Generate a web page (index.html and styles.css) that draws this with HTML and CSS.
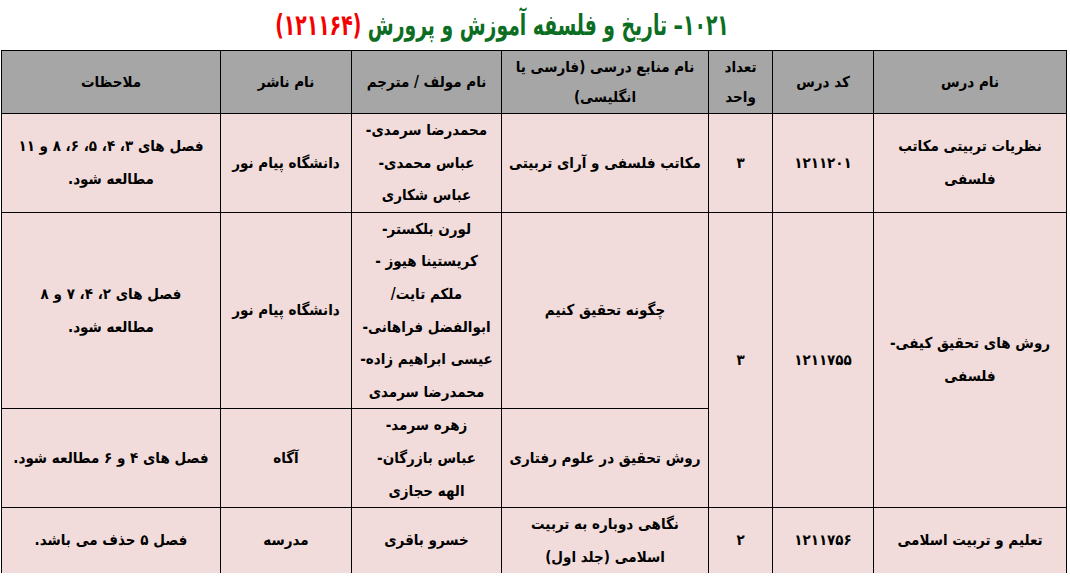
FILE: index.html
```html
<!DOCTYPE html>
<html lang="fa" dir="rtl">
<head>
<meta charset="utf-8">
<title>۱۰۲۱– تاریخ و فلسفه آموزش و پرورش</title>
<link rel="stylesheet" href="styles.css">
</head>
<body>
<div class="page">
  <div class="title-row">
    <h1 class="title"><span class="t-green">۱۰۲۱– تاریخ و فلسفه آموزش و پرورش</span> <span class="t-red">(۱۲۱۱۶۴)</span></h1>
  </div>
  <div class="table-wrap">
    <table class="grid">
      <colgroup>
        <col class="c-name">
        <col class="c-code">
        <col class="c-unit">
        <col class="c-src">
        <col class="c-auth">
        <col class="c-pub">
        <col class="c-note">
      </colgroup>
      <thead>
        <tr>
          <th>نام درس</th>
          <th>کد درس</th>
          <th>تعداد<br>واحد</th>
          <th>نام منابع درسی (فارسی یا<br>انگلیسی)</th>
          <th>نام مولف / مترجم</th>
          <th>نام ناشر</th>
          <th>ملاحظات</th>
        </tr>
      </thead>
      <tbody>
        <tr>
          <td class="name">نظریات تربیتی مکاتب<br>فلسفی</td>
          <td class="num">۱۲۱۱۲۰۱</td>
          <td class="num">۳</td>
          <td class="nowrap">مکاتب فلسفی و آرای تربیتی</td>
          <td>محمدرضا سرمدی-<br>عباس محمدی-<br>عباس شکاری</td>
          <td>دانشگاه پیام نور</td>
          <td>فصل های ۳، ۴، ۵، ۶، ۸ و ۱۱<br>مطالعه شود.</td>
        </tr>
        <tr>
          <td class="name" rowspan="2">روش های تحقیق کیفی-<br>فلسفی</td>
          <td class="num" rowspan="2">۱۲۱۱۷۵۵</td>
          <td class="num" rowspan="2">۳</td>
          <td>چگونه تحقیق کنیم</td>
          <td>لورن بلکستر-<br>کریستینا هیوز -<br>ملکم تایت/<br>ابوالفضل فراهانی-<br>عیسی ابراهیم زاده-<br>محمدرضا سرمدی</td>
          <td>دانشگاه پیام نور</td>
          <td>فصل های ۲، ۴، ۷ و ۸<br>مطالعه شود.</td>
        </tr>
        <tr>
          <td class="nowrap">روش تحقیق در علوم رفتاری</td>
          <td>زهره سرمد-<br>عباس بازرگان-<br>الهه حجازی</td>
          <td>آگاه</td>
          <td class="nowrap">فصل های ۴ و ۶ مطالعه شود.</td>
        </tr>
        <tr class="last">
          <td class="name">تعلیم و تربیت اسلامی</td>
          <td class="num">۱۲۱۱۷۵۶</td>
          <td class="num">۲</td>
          <td>نگاهی دوباره به تربیت<br>اسلامی (جلد اول)</td>
          <td>خسرو باقری</td>
          <td>مدرسه</td>
          <td>فصل ۵ حذف می باشد.</td>
        </tr>
      </tbody>
    </table>
  </div>
</div>
</body>
</html>
```
FILE: styles.css
```css
html, body {
  margin: 0;
  padding: 0;
  background: #ffffff;
}
body {
  font-family: "DejaVu Sans Condensed", "DejaVu Sans", "Noto Sans", sans-serif;
  color: #000000;
  overflow: hidden;
  height: 577px;
}
.page {
  width: 1070px;
  padding-top: 5px;
}
.title-row {
  height: 45px;
  display: flex;
  justify-content: center;
  padding-left: 0;
  padding-right: 66px;
}
.title {
  margin: 0;
  line-height: 40px;
  font-size: 29px;
  font-weight: bold;
  white-space: nowrap;
  direction: rtl;
  transform: scaleX(0.72);
  transform-origin: center top;
}
.t-green { color: #0b6e22; }
.t-red { color: #f40000; }
.table-wrap {
  padding: 0 3px;
  height: 527px;
  overflow: hidden;
}
.grid {
  width: 1065px;
  border-collapse: collapse;
  table-layout: fixed;
  direction: rtl;
}
.c-name { width: 193px; }
.c-code { width: 101px; }
.c-unit { width: 64px; }
.c-src { width: 207px; }
.c-auth { width: 150px; }
.c-pub { width: 131px; }
.c-note { width: 219px; }
.grid th, .grid td {
  border: 1px solid #000000;
  padding: 0 4px;
  text-align: center;
  vertical-align: middle;
  font-weight: bold;
  font-size: 15px;
}
.grid th {
  background: #a6a6a6;
  height: 62px;
  line-height: 30px;
}
.grid td {
  background: #f2dcdb;
  line-height: 32.6px;
}
.grid .name { padding: 0 10px; }
.grid .num { letter-spacing: 1px; }
.grid .nowrap { white-space: nowrap; }
.grid tr.last td { border-bottom: none; }
```
